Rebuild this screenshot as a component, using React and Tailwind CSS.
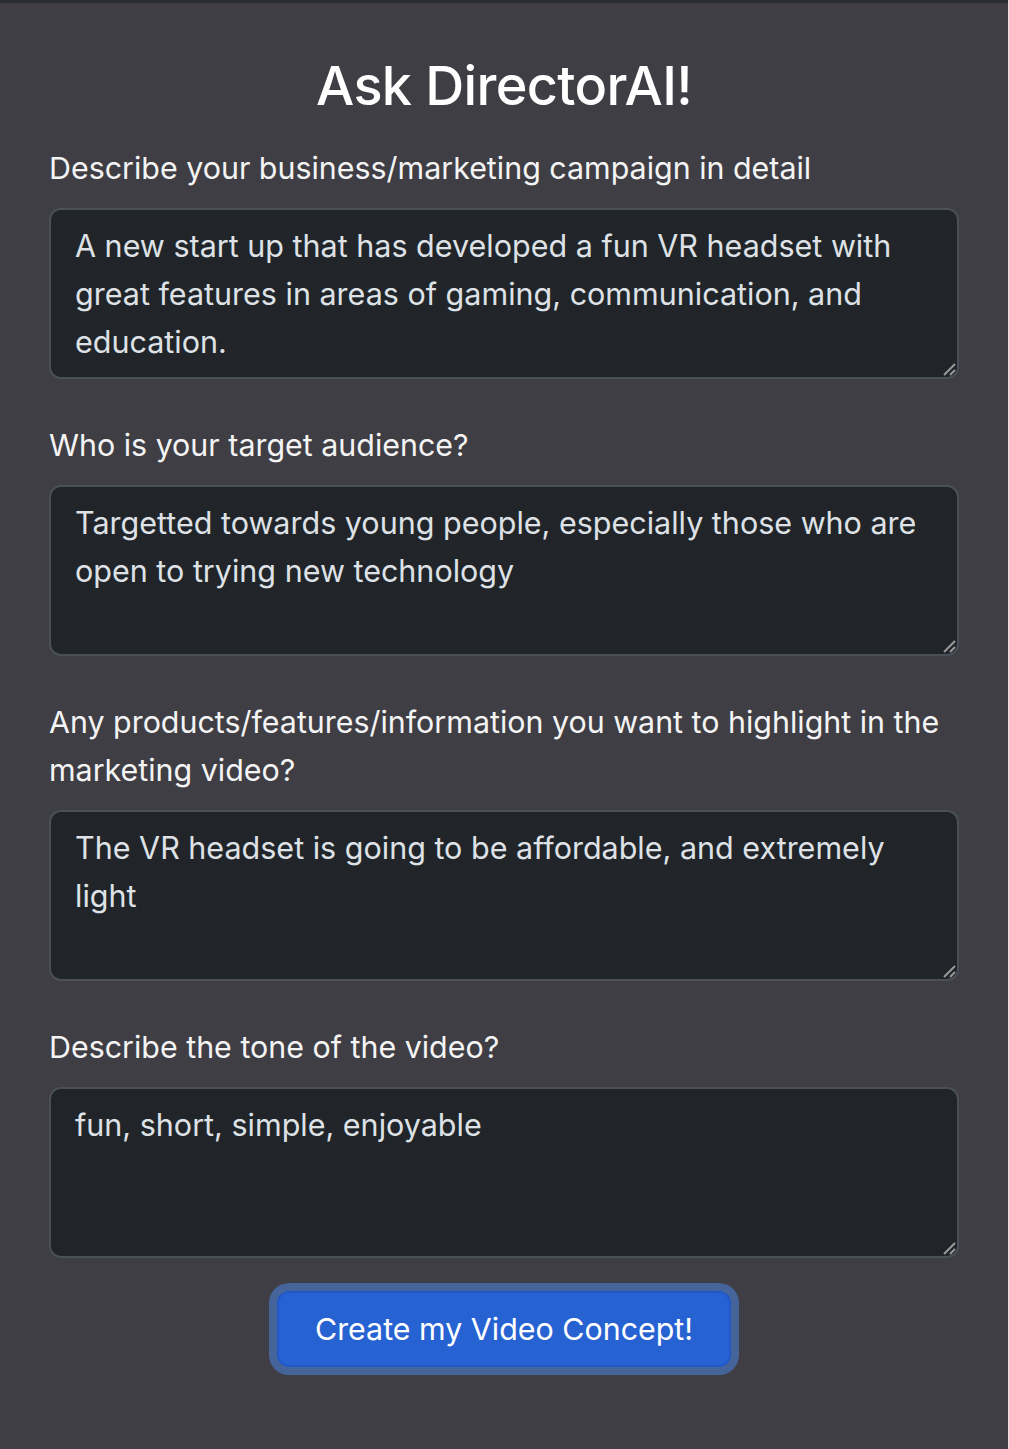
import React from 'react';

const fields = [
    {
        label: 'Describe your business/marketing campaign in detail',
        value: 'A new start up that has developed a fun VR headset with great features in areas of gaming, communication, and education.',
    },
    {
        label: 'Who is your target audience?',
        value: 'Targetted towards young people, especially those who are open to trying new technology',
    },
    {
        label: 'Any products/features/information you want to highlight in the marketing video?',
        value: 'The VR headset is going to be affordable, and extremely light',
    },
    {
        label: 'Describe the tone of the video?',
        value: 'fun, short, simple, enjoyable',
    },
];

// grip drawn by hand, chromium's default one is much smaller
const Grip = () => (
    <svg className="pointer-events-none absolute bottom-[3px] right-[3px]" width="14" height="14" viewBox="0 0 14 14">
        <path d="M2 13 L13 2" stroke="#9a9a9a" strokeWidth="2" />
        <path d="M8 13 L13 8" stroke="#9a9a9a" strokeWidth="2" />
    </svg>
);

const Field = ({ label, value, first }) => (
    <div className={first ? '' : 'mt-[42px]'}>
        <label className="mb-4 block text-[30.4px] leading-[48px] text-[#f4f4f5]">{label}</label>
        <div className="relative">
            <textarea
                readOnly
                value={value}
                className="block h-[171px] w-full resize-none rounded-xl border-2 border-[#495057] bg-[#212529] px-6 py-3 text-[30.5px] leading-[48px] text-[#dee2e6] outline-none"
            />
            <Grip />
        </div>
    </div>
);

export default function App() {
    return (
        <div
            className="flex min-h-[1449px] w-full flex-col border-r border-[#e6e6e6] bg-[#3f3e44]"
            style={{ fontFamily: 'Inter, "Noto Sans", sans-serif' }}
        >
            <div className="h-[3px] w-full bg-[#2a2d31]" />
            <div className="ml-[49px] w-[910px] pt-[50px]">
                <h1 className="text-center text-[54px] font-medium leading-[66px] tracking-[-0.012em] text-white">
                    Ask DirectorAI!
                </h1>
                <div className="mt-[25px]">
                    {fields.map((f, i) => (
                        <Field key={f.label} label={f.label} value={f.value} first={i === 0} />
                    ))}
                </div>
                <div className="mt-[25px] flex justify-center">
                    <div className="rounded-[20px] bg-[#45659a] p-2">
                        <button className="rounded-xl border-2 border-[#2358c8] bg-[#2762d3] px-[36px] py-[12px] text-[30.4px] leading-[48px] text-white">
                            Create my Video Concept!
                        </button>
                    </div>
                </div>
            </div>
        </div>
    );
}
